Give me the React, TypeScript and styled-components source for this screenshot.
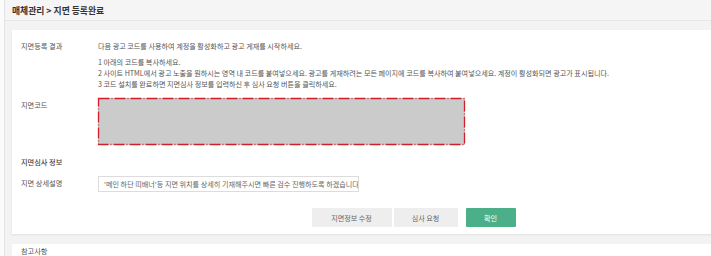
import React from "react";
import styled, { createGlobalStyle } from "styled-components";

const Global = createGlobalStyle`
  html, body { margin: 0; padding: 0; background: #f3f3f3; }
  body { font-family: "Noto Sans CJK KR", "Noto Sans", sans-serif; overflow: hidden; }
  * { box-sizing: border-box; }
`;

const Page = styled.div`
  display: flex;
  width: 711px;
  height: 256px;
  overflow: hidden;
`;

const Rail = styled.div`
  width: 5px;
  flex: none;
  background: #fbfbfb;
  border-right: 1px solid #e4e4e4;
`;

const Main = styled.div`
  flex: 1;
  min-width: 0;
  display: flex;
  flex-direction: column;
`;

const Header = styled.div`
  flex: none;
  height: 21px;
  display: flex;
  align-items: flex-end;
  padding: 0 0 3px 7px;
  font-size: 8.8px;
  line-height: 12px;
  font-weight: 700;
  color: #333;
  background: #f5f5f5;
  border-bottom: 1px solid #e6e6e6;
  white-space: nowrap;
`;

const Content = styled.div`
  flex: none;
  padding: 9px 0 0 7px;
  display: flex;
  flex-direction: column;
  gap: 10px;
`;

const Card = styled.div`
  width: 794px;
  flex: none;
  background: #fff;
  box-shadow: 0 1px 2px rgba(0, 0, 0, 0.08);
  padding: 11px 0 7px 9px;
  display: flex;
  flex-direction: column;
`;

const Row = styled.div<{ $mt?: number }>`
  display: grid;
  grid-template-columns: 77px 1fr;
  margin-top: ${(p) => p.$mt ?? 0}px;
`;

const Label = styled.div<{ $pt?: number; $strong?: boolean }>`
  font-size: 7.2px;
  line-height: 11px;
  color: ${(p) => (p.$strong ? "#444" : "#555")};
  font-weight: ${(p) => (p.$strong ? 500 : 400)};
  padding-top: ${(p) => p.$pt ?? 0}px;
  white-space: nowrap;
`;

const Text = styled.div<{ $mt?: number }>`
  font-size: 7.1px;
  line-height: 11px;
  color: #555;
  margin-top: ${(p) => p.$mt ?? 0}px;
  white-space: nowrap;
`;

const CodeBox = styled.div`
  position: relative;
  width: 367px;
  height: 47px;
  background: #cbcbcb;
`;

const BorderSvg = styled.svg`
  position: absolute;
  inset: 0;
  width: 100%;
  height: 100%;
  overflow: visible;
`;

const Input = styled.div`
  width: 261px;
  height: 16px;
  border: 1px solid #dcdcdc;
  padding-left: 5px;
  display: flex;
  align-items: center;
  font-size: 7.1px;
  color: #666;
  white-space: nowrap;
  overflow: hidden;
`;

const Actions = styled.div`
  display: flex;
  justify-content: center;
  margin-top: 16px;
`;

const Btn = styled.div<{ $w: number; $primary?: boolean; $ml?: number }>`
  width: ${(p) => p.$w}px;
  height: 19px;
  margin-left: ${(p) => p.$ml ?? 0}px;
  display: flex;
  align-items: center;
  justify-content: center;
  font-size: 7.1px;
  border-radius: 1px;
  background: ${(p) => (p.$primary ? "#4bb089" : "#eeeeee")};
  color: ${(p) => (p.$primary ? "#fff" : "#666")};
`;

const NoteCard = styled.div`
  width: 794px;
  height: 40px;
  flex: none;
  background: #fff;
  padding: 2px 0 0 9px;
`;

export default function App() {
  return (
    <>
      <Global />
      <Page>
        <Rail />
        <Main>
          <Header>매체관리 &gt; 지면 등록완료</Header>
          <Content>
            <Card>
              <Row>
                <Label>지면등록 결과</Label>
                <div>
                  <Text>다음 광고 코드를 사용하여 계정을 활성화하고 광고 게재를 시작하세요.</Text>
                  <Text $mt={5}>1 아래의 코드를 복사하세요.</Text>
                  <Text>
                    2 사이트 HTML에서 광고 노출을 원하시는 영역 내 코드를 붙여넣으세요. 광고를 게재하려는 모든 페이지에 코드를 복사하여 붙여넣으세요. 계정이 활성화되면 광고가 표시됩니다.
                  </Text>
                  <Text>3 코드 설치를 완료하면 지면심사 정보를 입력하신 후 심사 요청 버튼을 클릭하세요.</Text>
                </div>
              </Row>
              <Row $mt={8}>
                <Label $pt={2}>지면코드</Label>
                <CodeBox>
                  <BorderSvg>
                    <rect
                      x="0.5"
                      y="0.5"
                      width="366"
                      height="46"
                      fill="none"
                      stroke="#d0202c"
                      strokeWidth="1.3"
                      strokeDasharray="11 2 1 2"
                    />
                  </BorderSvg>
                </CodeBox>
              </Row>
              <Row $mt={12}>
                <Label $strong>지면심사 정보</Label>
              </Row>
              <Row $mt={8}>
                <Label $pt={2}>지면 상세설명</Label>
                <Input>'메인 하단 띠배너'등 지면 위치를 상세히 기재해주시면 빠른 검수 진행하도록 하겠습니다.</Input>
              </Row>
              <Actions>
                <Btn $w={80}>지면정보 수정</Btn>
                <Btn $w={64} $ml={2}>심사 요청</Btn>
                <Btn $w={50} $ml={8} $primary>확인</Btn>
              </Actions>
            </Card>
            <NoteCard>
              <Label>참고사항</Label>
            </NoteCard>
          </Content>
        </Main>
      </Page>
    </>
  );
}
